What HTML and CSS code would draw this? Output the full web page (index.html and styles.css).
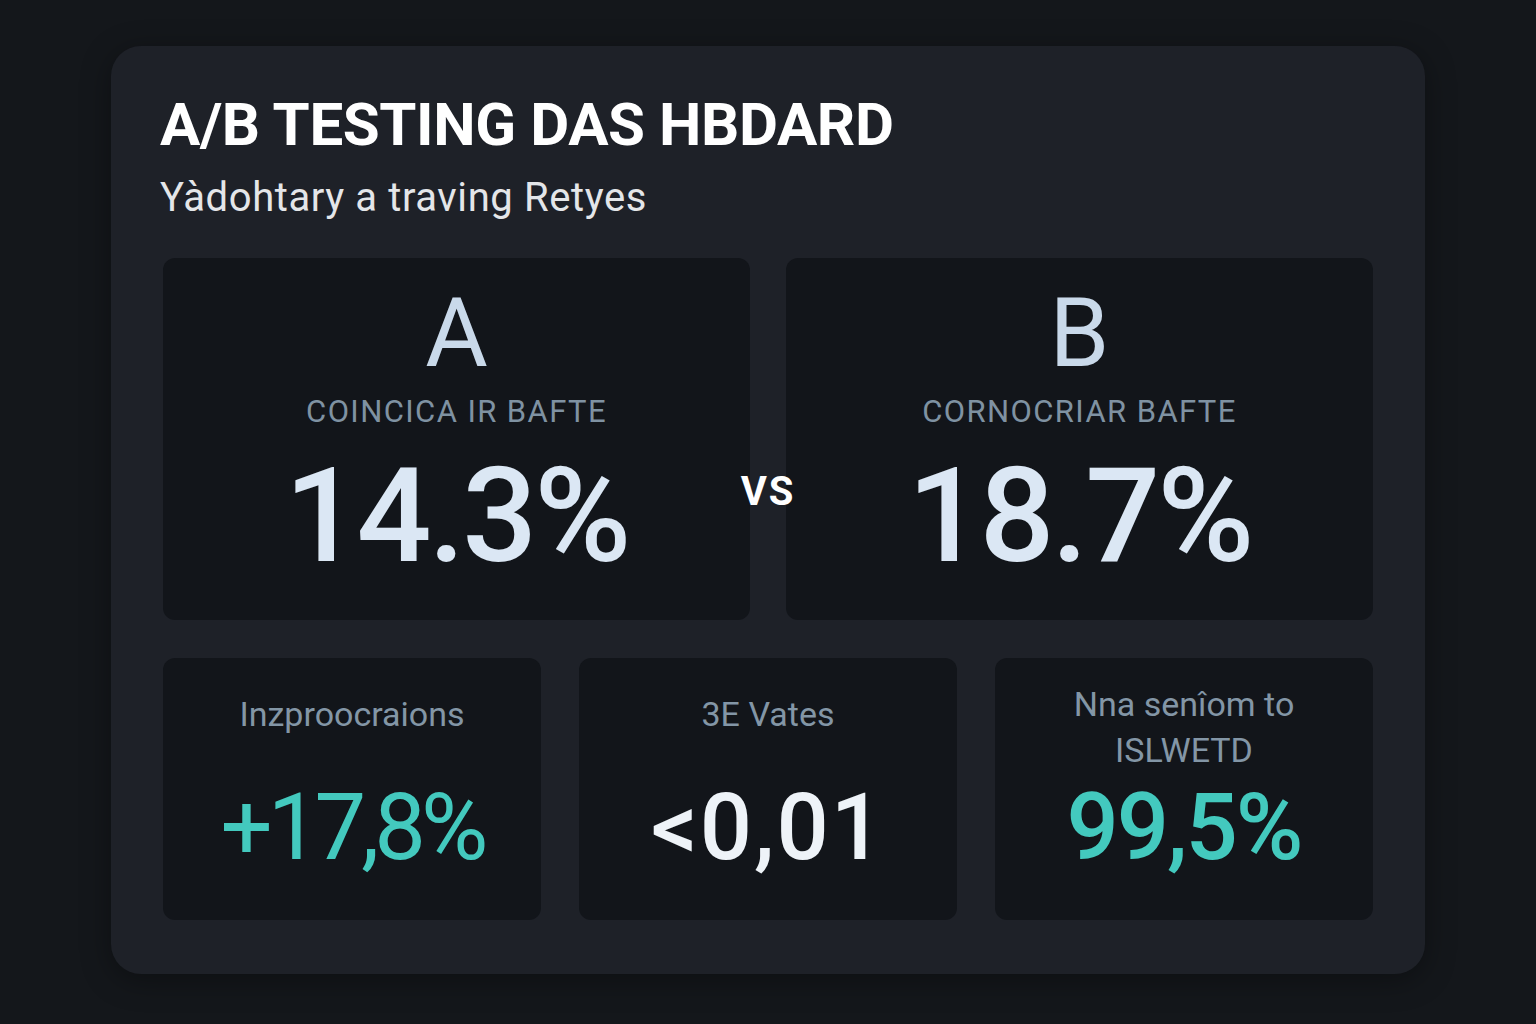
FILE: index.html
```html
<!DOCTYPE html>
<html lang="en">
<head>
<meta charset="utf-8">
<title>A/B Testing Dashboard</title>
<link rel="stylesheet" href="styles.css">
</head>
<body>
<main class="card">
  <h1 class="title">A/B TESTING DAS HBDARD</h1>
  <p class="subtitle">Yàdohtary a traving Retyes</p>

  <section class="compare">
    <div class="variant">
      <div class="variant-letter">A</div>
      <div class="variant-label">COINCICA IR BAFTE</div>
      <div class="variant-value">14.3%</div>
    </div>
    <div class="vs-col"><span class="vs">VS</span></div>
    <div class="variant">
      <div class="variant-letter">B</div>
      <div class="variant-label">CORNOCRIAR BAFTE</div>
      <div class="variant-value">18.7%</div>
    </div>
  </section>

  <section class="stats">
    <div class="stat">
      <div class="stat-label stat-label--one">Inzproocraions</div>
      <div class="stat-value stat-value--teal">+17,8%</div>
    </div>
    <div class="stat">
      <div class="stat-label stat-label--one">3E Vates</div>
      <div class="stat-value stat-value--white">&lt;0,01</div>
    </div>
    <div class="stat">
      <div class="stat-label">Nna senîom to<br>ISLWETD</div>
      <div class="stat-value stat-value--teal stat-value--c">99,5%</div>
    </div>
  </section>
</main>
</body>
</html>
```

FILE: styles.css
```css
* { box-sizing: border-box; }

html, body {
  margin: 0;
  padding: 0;
}

body {
  background: #14171b;
  font-family: Roboto, "Liberation Sans", sans-serif;
  width: 1536px;
  height: 1024px;
  overflow: hidden;
}

.card {
  width: 1314px;
  height: 928px;
  margin: 46px 0 0 111px;
  padding: 49px 52px 54px 49px;
  background: #1e2128;
  border-radius: 30px;
  box-shadow: 0 6px 30px rgba(0, 0, 0, 0.35);
}

.title {
  margin: 0;
  font-size: 60px;
  line-height: 60px;
  font-weight: 700;
  color: #ffffff;
  letter-spacing: -0.4px;
}

.subtitle {
  margin: 23px 0 0;
  font-size: 40px;
  line-height: 40px;
  font-weight: 400;
  color: #e4e6e9;
  letter-spacing: 0.6px;
}

.compare {
  margin: 40px 0 0 3px;
  display: grid;
  grid-template-columns: 1fr 36px 1fr;
  height: 362px;
}

.variant {
  background: #12151a;
  border-radius: 12px;
  padding-top: 27px;
  display: flex;
  flex-direction: column;
  align-items: center;
}

.variant-letter {
  font-size: 96px;
  line-height: 96px;
  font-weight: 400;
  color: #c9d9ea;
}

.variant-label {
  margin-top: 15px;
  font-size: 31px;
  line-height: 31px;
  font-weight: 400;
  letter-spacing: 1.4px;
  color: #7f92a2;
  white-space: nowrap;
}

.variant-value {
  margin-top: 23px;
  font-size: 132px;
  line-height: 132px;
  font-weight: 500;
  letter-spacing: -3px;
  color: #dbe7f4;
}

.vs-col {
  display: flex;
  justify-content: center;
  align-items: flex-start;
  padding-top: 214px;
  position: relative;
  z-index: 1;
}

.vs {
  font-size: 40px;
  line-height: 40px;
  font-weight: 700;
  letter-spacing: 2px;
  color: #ffffff;
  white-space: nowrap;
}

.stats {
  margin: 38px 0 0 3px;
  display: grid;
  grid-template-columns: repeat(3, 1fr);
  column-gap: 38px;
  height: 262px;
}

.stat {
  background: #12151a;
  border-radius: 12px;
  padding-top: 23px;
  display: flex;
  flex-direction: column;
  align-items: center;
}

.stat-label {
  height: 92px;
  display: flex;
  align-items: center;
  justify-content: center;
  text-align: center;
  font-size: 34px;
  line-height: 46px;
  color: #8396a6;
}

.stat-label--one {
  padding-bottom: 26px;
}

.stat-value {
  margin-top: 9px;
  font-size: 92px;
  line-height: 92px;
  font-weight: 400;
  white-space: nowrap;
}

.stat-value--teal {
  color: #43c9be;
  letter-spacing: -5px;
}

.stat-value--c {
  font-weight: 500;
  letter-spacing: -2px;
}

.stat-value--white {
  color: #eef3f8;
  font-weight: 500;
  letter-spacing: 2px;
}
```
